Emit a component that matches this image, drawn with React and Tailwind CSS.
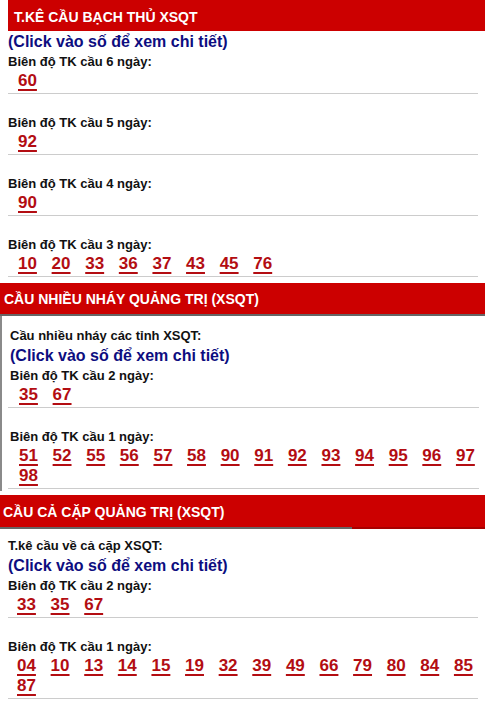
const FONT = { fontFamily: '"Liberation Sans", Arial, sans-serif' };

function Numbers({ items, indent }) {
  return (
    <div className={`flex flex-wrap gap-x-[14.7px] ${indent}`}>
      {items.map((n, i) => (
        <a
          key={i}
          href="#"
          className="text-[17px] leading-[20px] font-bold text-[#b30d12] underline decoration-[1.5px] underline-offset-[3px]"
        >
          {n}
        </a>
      ))}
    </div>
  );
}

function Block({ label, items, first, indent = "pl-[10px]", labelIndent = "" }) {
  return (
    <div className={`border-b border-[#cccccc] pb-[2px] ${first ? "" : "pt-[20px]"}`}>
      <div className={`text-[13px] leading-[18px] font-bold text-[#111] ${labelIndent}`}>{label}</div>
      <Numbers items={items} indent={indent} />
    </div>
  );
}

function ClickHint({ className = "" }) {
  return (
    <div className={`text-[16px] leading-[22px] font-bold text-[#0d0d80] ${className}`}>
      (Click vào số để xem chi tiết)
    </div>
  );
}

export default function App() {
  return (
    <div className="w-[485px] bg-white" style={FONT}>
      {/* Bạch thủ */}
      <section className="pl-[8px] pr-[7px]">
        <div className="-mr-[7px] h-[31px] bg-[#cc0000] px-[6px] pt-[7px] text-[14px] leading-[20px] font-bold text-white">
          T.KÊ CẦU BẠCH THỦ XSQT
        </div>
        <ClickHint />
        <Block first label="Biên độ TK cầu 6 ngày:" items={["60"]} />
        <Block label="Biên độ TK cầu 5 ngày:" items={["92"]} />
        <Block label="Biên độ TK cầu 4 ngày:" items={["90"]} />
        <Block
          label="Biên độ TK cầu 3 ngày:"
          items={["10", "20", "33", "36", "37", "43", "45", "76"]}
        />
      </section>

      {/* Nhiều nháy */}
      <section className="mt-[6px]">
        <div className="h-[31px] bg-[#cc0000] px-[4px] pt-[6px] text-[14px] leading-[20px] font-bold text-white">
          CẦU NHIỀU NHÁY QUẢNG TRỊ (XSQT)
        </div>
        <div className="h-[2px] bg-[#666]" />
        <div className="border-l-2 border-[#8a8a8a] pl-[6px] pr-[6px] pt-[11px] pb-[2px]">
          <div className="pl-[2px] text-[13px] leading-[18px] font-bold text-[#111]">
            Cầu nhiều nháy các tỉnh XSQT:
          </div>
          <ClickHint className="pl-[2px]" />
          <Block
            first
            labelIndent="pl-[2px]"
            indent="pl-[11px]"
            label="Biên độ TK cầu 2 ngày:"
            items={["35", "67"]}
          />
          <Block
            labelIndent="pl-[2px]"
            indent="pl-[11px]"
            label="Biên độ TK cầu 1 ngày:"
            items={["51", "52", "55", "56", "57", "58", "90", "91", "92", "93", "94", "95", "96", "97", "98"]}
          />
        </div>
      </section>

      {/* Cả cặp */}
      <section className="mt-[4px]">
        <div className="h-[32px] bg-[#cc0000] px-[3px] pt-[7px] text-[14px] leading-[20px] font-bold text-white">
          CẦU CẢ CẶP QUẢNG TRỊ (XSQT)
        </div>
        <div className="flex h-[2px]">
          <div className="w-[352px] bg-[#666]" />
          <div className="flex-1 bg-[#a80000]" />
        </div>
        <div className="pl-[8px] pr-[7px] pt-[8px]">
          <div className="text-[13px] leading-[18px] font-bold text-[#111]">T.kê cầu về cả cặp XSQT:</div>
          <ClickHint />
          <Block first indent="pl-[9px]" label="Biên độ TK cầu 2 ngày:" items={["33", "35", "67"]} />
          <Block
            indent="pl-[9px]"
            label="Biên độ TK cầu 1 ngày:"
            items={["04", "10", "13", "14", "15", "19", "32", "39", "49", "66", "79", "80", "84", "85", "87"]}
          />
        </div>
      </section>
    </div>
  );
}
